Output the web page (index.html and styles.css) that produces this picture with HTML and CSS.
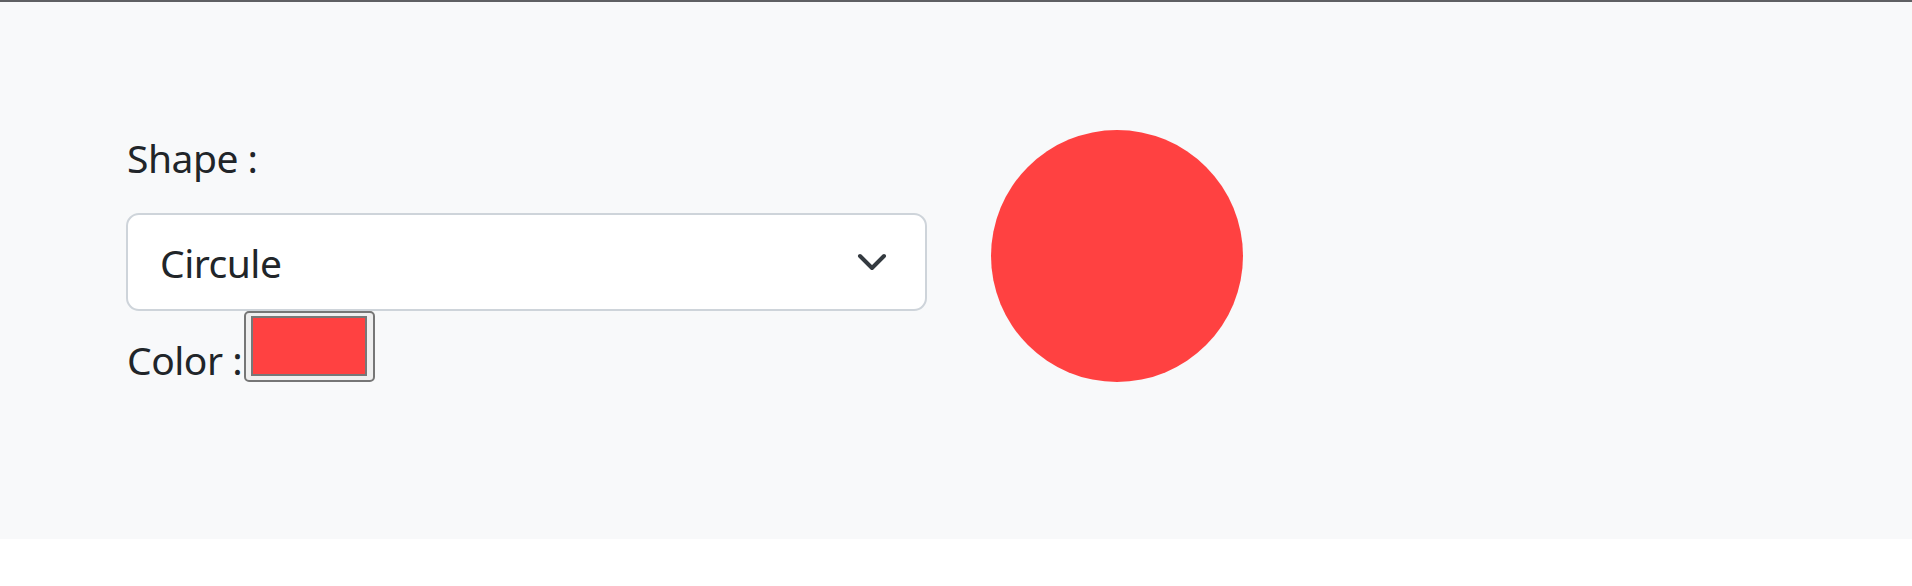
FILE: index.html
```html
<!DOCTYPE html>
<html lang="en">
<head>
<meta charset="utf-8">
<title>Shape</title>
<link rel="stylesheet" href="styles.css">
</head>
<body>
<main class="stage">
  <div class="row">
    <div class="controls">
      <label class="label label-shape">Shape :</label>
      <div class="select">
        <span class="select-value">Circule</span>
        <svg class="chevron" width="32" height="32" viewBox="0 0 16 16" aria-hidden="true">
          <path d="M2 5 L8 11 L14 5" fill="none" stroke="#343a40" stroke-width="2" stroke-linecap="round" stroke-linejoin="round"/>
        </svg>
      </div>
      <div class="color-row">
        <label class="label label-color">Color :</label>
        <span class="swatch"><span class="swatch-fill"></span></span>
      </div>
    </div>
    <div class="shape"></div>
  </div>
</main>
</body>
</html>
```
FILE: styles.css
```css
html, body {
  margin: 0;
  padding: 0;
  background: #ffffff;
}
body {
  font-family: "Noto Sans", "Open Sans", sans-serif;
  color: #212529;
}
.stage {
  background: #f8f9fa;
  border-top: 2px solid #5f6063;
  height: 539px;
  box-sizing: border-box;
  padding: 126px 0 0 126px;
}
.row {
  display: flex;
  align-items: flex-start;
  gap: 64px;
}
.controls {
  width: 801px;
  display: flex;
  flex-direction: column;
}
.label {
  font-size: 39px;
  line-height: 60px;
  letter-spacing: -0.5px;
  display: block;
}
.label-shape {
  margin-bottom: 25px;
  padding-left: 1px;
}
.select {
  height: 98px;
  box-sizing: border-box;
  border: 2px solid #ced4da;
  border-radius: 13px;
  background: #ffffff;
  display: flex;
  align-items: center;
  justify-content: space-between;
  padding: 0 37px 0 32px;
}
.select-value {
  font-size: 39px;
  line-height: 60px;
  letter-spacing: -0.5px;
  padding-top: 2px;
}
.chevron {
  display: block;
}
.color-row {
  display: flex;
  align-items: flex-start;
}
.label-color {
  margin-top: 19px;
  padding-left: 1px;
  white-space: pre;
}
.swatch {
  width: 131px;
  height: 71px;
  box-sizing: border-box;
  margin-left: 2px;
  border: 2px solid #767676;
  border-radius: 5px;
  background: #efefef;
  padding: 3px 6px 4px 5px;
  display: flex;
}
.swatch-fill {
  flex: 1;
  border: 2px solid #777777;
  background: #ff4141;
}
.shape {
  width: 252px;
  height: 252px;
  border-radius: 50%;
  background: #ff4141;
  margin-top: 2px;
}
```
